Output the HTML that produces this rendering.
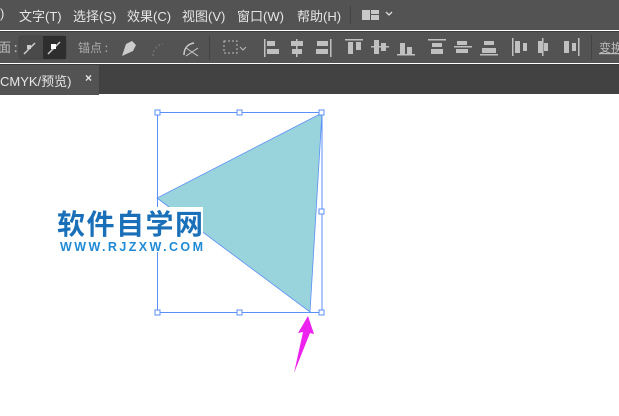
<!DOCTYPE html>
<html><head><meta charset="utf-8"><style>
*{margin:0;padding:0;box-sizing:border-box}
body{width:619px;height:416px;overflow:hidden;background:#fff;font-family:"Liberation Sans","Noto Sans CJK SC",sans-serif;position:relative}
.menu{position:absolute;left:0;top:0;width:619px;height:30px;background:#535353;color:#e6e6e6;font-size:13px}
.menu span{position:absolute;top:6px;white-space:nowrap}
.tool{position:absolute;left:0;top:31px;width:619px;height:32px;background:#535353;border-top:1px solid #3c3c3c}
.tabs{position:absolute;left:0;top:64px;width:619px;height:30px;background:#424242;border-top:1px solid #3a3a3a}
.tab{position:absolute;left:0;top:0;width:99px;height:30px;background:#535353;color:#e6e6e6;font-size:13px}
svg{position:absolute;left:0;top:0}
</style></head><body>
<div class="menu">
<span style="left:0">)</span>
<span style="left:19px">文字(T)</span>
<span style="left:73px">选择(S)</span>
<span style="left:127px">效果(C)</span>
<span style="left:182px">视图(V)</span>
<span style="left:237px">窗口(W)</span>
<span style="left:297px">帮助(H)</span>
</div>
<div class="tool"></div>
<div class="tabs"><div class="tab"><span style="position:absolute;left:0;top:6px">CMYK/预览)</span><span style="position:absolute;left:85px;top:6px;font-weight:bold;font-size:12px">×</span></div></div>
<svg width="619" height="416" viewBox="0 0 619 416">
<rect x="350" y="5" width="1" height="19" fill="#444"/>
<rect x="362" y="10" width="8" height="10" fill="#c8c8c8"/><rect x="371" y="10" width="8" height="4" fill="#c8c8c8"/><rect x="371" y="15" width="8" height="5" fill="#c8c8c8"/>
<path d="M386 12l3 3 3-3" stroke="#ddd" fill="none" stroke-width="1.3"/>
<text x="-2" y="52" fill="#bbb" font-size="13" font-family="Noto Sans CJK SC">面 :</text>
<rect x="19" y="36" width="47" height="23" rx="3" fill="#4a4a4a" stroke="#444"/>
<rect x="43" y="36" width="23" height="23" fill="#2e2e2e"/>
<path d="M24 54l11-11" stroke="#ccc" stroke-width="1.5"/><rect x="27" y="45" width="4" height="4" fill="#ccc"/>
<path d="M48 54l12-12" stroke="#ccc" stroke-width="1.5"/><rect x="51" y="44" width="5" height="5" fill="#fff"/>
<text x="78" y="52" fill="#aaa" font-size="12" font-family="Noto Sans CJK SC">锚点 :</text>
<path d="M122 56l4-12 6-3 4 4-3 6z" fill="#ccc"/>
<path d="M153 56c0-6 4-11 10-12" stroke="#6a6a6a" stroke-width="2" fill="none" stroke-dasharray="2 2"/>
<path d="M184 55c0-7 4-11 10-12" stroke="#ccc" stroke-width="1.5" fill="none"/><path d="M186 48l12 8M186 56l12-8" stroke="#ccc"/>
<rect x="209" y="36" width="1" height="24" fill="#444"/>
<rect x="224" y="41" width="13" height="12" fill="none" stroke="#bbb" stroke-dasharray="2 2"/>
<path d="M240 47l3 3 3-3" stroke="#bbb" fill="none"/>
<g fill="#c0c0c0">
<rect x="264" y="39" width="1.5" height="18"/><rect x="267" y="41" width="8" height="5"/><rect x="267" y="49" width="12" height="5"/>
<rect x="296" y="39" width="1.5" height="18"/><rect x="291" y="41" width="12" height="5"/><rect x="292" y="49" width="10" height="5"/>
<rect x="330" y="39" width="1.5" height="18"/><rect x="317" y="41" width="11" height="5"/><rect x="316" y="49" width="12" height="5"/>
<rect x="345" y="39" width="18" height="1.5"/><rect x="348" y="42" width="5" height="12"/><rect x="356" y="42" width="5" height="8"/>
<rect x="371" y="46" width="18" height="1.5"/><rect x="374" y="40" width="5" height="14"/><rect x="381" y="43" width="5" height="8"/>
<rect x="397" y="54" width="18" height="1.5"/><rect x="400" y="43" width="5" height="11"/><rect x="407" y="47" width="5" height="7"/>
<rect x="428" y="39" width="18" height="1.5"/><rect x="432" y="43" width="10" height="4"/><rect x="431" y="49" width="12" height="5"/>
<rect x="454" y="46" width="18" height="1.5"/><rect x="457" y="41" width="10" height="4"/><rect x="456" y="49" width="12" height="4"/>
<rect x="480" y="54" width="18" height="1.5"/><rect x="484" y="41" width="10" height="4"/><rect x="482" y="48" width="14" height="5"/>
<rect x="512" y="38" width="1.5" height="18"/><rect x="515" y="41" width="5" height="12"/><rect x="523" y="43" width="4" height="8"/>
<rect x="542" y="38" width="1.5" height="18"/><rect x="538" y="41" width="4" height="12"/><rect x="544" y="43" width="4" height="8"/>
<rect x="578" y="38" width="1.5" height="18"/><rect x="564" y="41" width="5" height="12"/><rect x="572" y="43" width="4" height="8"/>
</g>
<rect x="591" y="35" width="1" height="25" fill="#444"/>
<text x="599" y="52" fill="#bbb" font-size="12" font-family="Noto Sans CJK SC" text-decoration="underline">变换</text>
<polygon points="322,113 157,198 310,312" fill="#99d3db" stroke="#5b8ff9" stroke-width="0.8"/>
<rect x="157.5" y="112.5" width="164.5" height="200" fill="none" stroke="#5b8ff9" stroke-width="1"/>
<g fill="#fff" stroke="#5b8ff9" stroke-width="1">
<rect x="155" y="110" width="5" height="5"/><rect x="237" y="110" width="5" height="5"/><rect x="319" y="110" width="5" height="5"/>
<rect x="319" y="209" width="5" height="5"/>
<rect x="155" y="310" width="5" height="5"/><rect x="237" y="310" width="5" height="5"/><rect x="319" y="310" width="5" height="5"/>
</g>
<rect x="57" y="207" width="146" height="45" fill="#fff"/>
<text x="57" y="234" fill="#1a70b8" font-size="28" font-weight="bold" font-family="Noto Sans CJK SC" textLength="146">软件自学网</text>
<text x="60" y="251" fill="#1f8ad6" font-size="12.5" font-weight="bold" font-family="Liberation Sans" textLength="143">WWW.RJZXW.COM</text>
<path d="M308 316l6 18-4-1-16 40 9-41-5 1z" fill="#ee22ee"/>
</svg>
</body></html>
